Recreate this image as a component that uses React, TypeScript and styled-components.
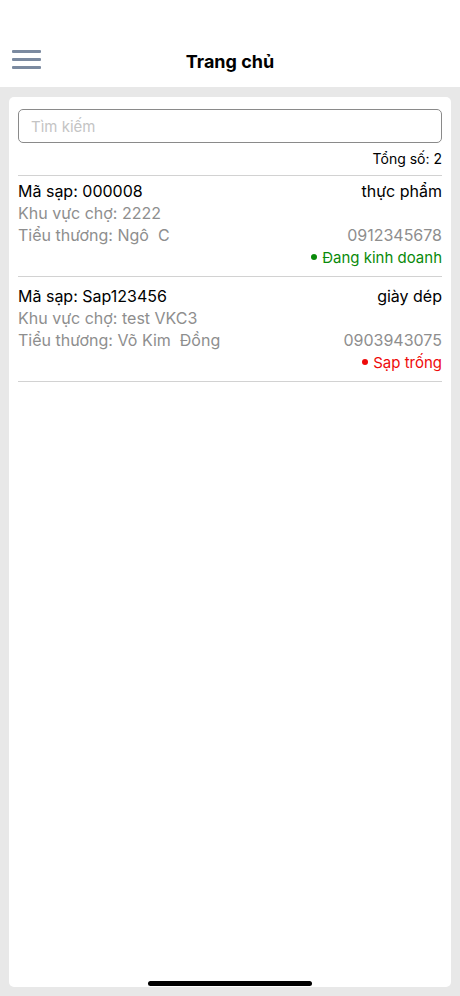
import React from 'react';
import styled, { createGlobalStyle } from 'styled-components';

const GlobalStyle = createGlobalStyle`
  html, body {
    margin: 0;
    padding: 0;
    background: #e8e8e8;
  }
  body {
    font-family: Inter, "Liberation Sans", sans-serif;
  }
`;

const Screen = styled.div`
  width: 460px;
  height: 996px;
  display: flex;
  flex-direction: column;
  background: #e8e8e8;
  position: relative;
  overflow: hidden;
`;

const Header = styled.div`
  height: 87px;
  background: #fff;
  display: grid;
  grid-template-columns: 60px 1fr 60px;
  align-items: end;
  padding-bottom: 15px;
  box-sizing: border-box;
`;

const MenuButton = styled.div`
  display: flex;
  flex-direction: column;
  gap: 5px;
  padding-left: 12px;
  padding-bottom: 3px;
`;

const MenuLine = styled.span`
  display: block;
  width: 29px;
  height: 3px;
  background: #7b8aa0;
  border-radius: 1px;
`;

const Title = styled.h1`
  margin: 0;
  text-align: center;
  font-size: 18px;
  font-weight: 700;
  color: #000;
`;

const Body = styled.div`
  flex: 1;
  padding: 10px 9px 9px 9px;
  display: flex;
`;

const Card = styled.div`
  flex: 1;
  background: #fff;
  border-radius: 5px;
  padding: 12px 9px;
`;

const Search = styled.input`
  width: 100%;
  box-sizing: border-box;
  height: 34px;
  border: 1px solid #8a8a8a;
  border-radius: 5px;
  padding: 0 12px;
  font-family: inherit;
  font-size: 15px;
  color: #000;
  outline: none;
  &::placeholder {
    color: #c4c4c4;
  }
`;

const Total = styled.div`
  text-align: right;
  font-size: 14px;
  color: #000;
  margin-top: 7px;
  padding-bottom: 8px;
  border-bottom: 1.5px solid #d2d2d2;
`;

const Item = styled.div<{ $first?: boolean }>`
  display: flex;
  flex-direction: column;
  padding: ${(p) => (p.$first ? '4px' : '8px')} 0 8px;
  border-bottom: 1.5px solid #d2d2d2;
`;

const Row = styled.div`
  display: flex;
  justify-content: space-between;
  align-items: center;
  height: 22px;
  font-size: 16px;
`;

const Text = styled.span<{ $muted?: boolean }>`
  color: ${(p) => (p.$muted ? '#8e8e8e' : '#000')};
  white-space: pre;
`;

const Status = styled.span<{ $color: string }>`
  color: ${(p) => p.$color};
  font-size: 15px;
  display: flex;
  align-items: center;
  gap: 5px;
  &::before {
    content: '';
    width: 6px;
    height: 6px;
    border-radius: 50%;
    background: ${(p) => p.$color};
  }
`;

const HomeIndicator = styled.div`
  position: absolute;
  left: 148px;
  bottom: 10px;
  width: 164px;
  height: 5px;
  border-radius: 3px;
  background: #000;
`;

const stalls = [
  {
    code: '000008',
    category: 'thực phẩm',
    area: '2222',
    owner: 'Ngô  C',
    phone: '0912345678',
    status: 'Đang kinh doanh',
    color: '#0a8a0a',
  },
  {
    code: 'Sap123456',
    category: 'giày dép',
    area: 'test VKC3',
    owner: 'Võ Kim  Đồng',
    phone: '0903943075',
    status: 'Sạp trống',
    color: '#ee0a0a',
  },
];

export default function App() {
  return (
    <Screen>
      <GlobalStyle />
      <Header>
        <MenuButton>
          <MenuLine />
          <MenuLine />
          <MenuLine />
        </MenuButton>
        <Title>Trang chủ</Title>
        <div />
      </Header>
      <Body>
        <Card>
          <Search placeholder="Tìm kiếm" />
          <Total>Tổng số: 2</Total>
          {stalls.map((s, i) => (
            <Item key={s.code} $first={i === 0}>
              <Row>
                <Text>Mã sạp: {s.code}</Text>
                <Text>{s.category}</Text>
              </Row>
              <Row>
                <Text $muted>Khu vực chợ: {s.area}</Text>
              </Row>
              <Row>
                <Text $muted>Tiểu thương: {s.owner}</Text>
                <Text $muted>{s.phone}</Text>
              </Row>
              <Row>
                <span />
                <Status $color={s.color}>{s.status}</Status>
              </Row>
            </Item>
          ))}
        </Card>
      </Body>
      <HomeIndicator />
    </Screen>
  );
}
